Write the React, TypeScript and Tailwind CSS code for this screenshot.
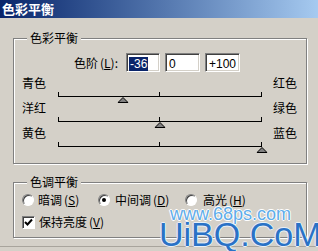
import React from "react";

const cjk = `"Noto Sans CJK SC", "Liberation Sans", sans-serif`;

type Slider = { left: string; right: string; value: number };

const sliders: Slider[] = [
  { left: "青色", right: "红色", value: -36 },
  { left: "洋红", right: "绿色", value: 0 },
  { left: "黄色", right: "蓝色", value: 100 },
];

function Thumb() {
  return (
    <svg width="11" height="6" viewBox="0 0 11 6" className="block">
      <defs>
        <pattern id="hatch" width="2" height="2" patternUnits="userSpaceOnUse">
          <rect width="2" height="2" fill="#fff" />
          <rect width="1" height="1" fill="#000" />
          <rect x="1" y="1" width="1" height="1" fill="#000" />
        </pattern>
      </defs>
      <polygon points="5.5,0.5 10.5,5.5 0.5,5.5" fill="url(#hatch)" stroke="#000" strokeWidth="1" />
    </svg>
  );
}

function Underlined({ pre, ch, post }: { pre: string; ch: string; post?: string }) {
  return (
    <span className="whitespace-nowrap">
      {pre}
      <span className="ml-[2px]">(</span>
      <span className="underline underline-offset-1">{ch}</span>)
      {post}
    </span>
  );
}

function Sunken({ children, className = "" }: { children: React.ReactNode; className?: string }) {
  return (
    <div
      className={`border border-t-[#808080] border-l-[#808080] border-b-white border-r-white bg-white shadow-[inset_1px_1px_0_#404040,inset_-1px_-1px_0_#d4d0c8] ${className}`}
    >
      {children}
    </div>
  );
}

function Radio({ checked }: { checked?: boolean }) {
  return (
    <span className="grid size-[12px] shrink-0 place-items-center rounded-full border border-t-[#808080] border-l-[#808080] border-b-white border-r-white bg-white shadow-[inset_1px_1px_0_#404040]">
      {checked ? <span className="size-[4px] rounded-full bg-black" /> : null}
    </span>
  );
}

export default function App() {
  return (
    <div
      className="relative h-[251px] w-[318px] overflow-hidden bg-[#d4d0c8] text-[12px] leading-[14px] text-black"
      style={{ fontFamily: cjk }}
    >
      <div className="flex h-[18px] items-center bg-gradient-to-r from-[#0a246a] to-[#a6caf0] pl-[2px] text-[13px] font-bold text-white">
        色彩平衡
      </div>

      <div className="pl-[13px] pr-[11px]">
        <fieldset className="mt-[12px] border border-[#808080] p-0 shadow-[inset_1px_1px_0_#fff,1px_1px_0_#fff]">
          <legend className="ml-[13px] bg-[#d4d0c8] px-[3px] leading-[16px]">色彩平衡</legend>

          <div className="flex items-center pl-[60px] pt-[7px]">
            <Underlined pre="色阶" ch="L" post=":" />
            <div className="ml-[8px] flex gap-[5px]">
              <Sunken className="h-[19px] w-[34px] pl-[2px] pt-[2px]">
                <span className="bg-[#0a246a] px-[1px] text-white" style={{ fontFamily: `"Liberation Sans", sans-serif` }}>
                  -36
                </span>
              </Sunken>
              <Sunken className="h-[19px] w-[35px] pl-[3px] pt-[2px]">
                <span style={{ fontFamily: `"Liberation Sans", sans-serif` }}>0</span>
              </Sunken>
              <Sunken className="h-[19px] w-[35px] pl-[3px] pt-[2px]">
                <span style={{ fontFamily: `"Liberation Sans", sans-serif` }}>+100</span>
              </Sunken>
            </div>
          </div>

          <div className="mt-[4px] flex flex-col gap-[4px] pb-[16px]">
            {sliders.map((s) => (
              <div key={s.left}>
                <div className="flex justify-between pl-[8px] pr-[9px]">
                  <span>{s.left}</span>
                  <span>{s.right}</span>
                </div>
                <div className="relative ml-[44px] mt-[2px] flex h-[5px] w-[204px]">
                  <div className="w-1/2 border-b border-l border-r border-black" />
                  <div className="w-1/2 border-b border-r border-black" />
                  <div
                    className="absolute top-full -translate-x-1/2"
                    style={{ left: `${((s.value + 100) / 200) * 100}%` }}
                  >
                    <Thumb />
                  </div>
                </div>
              </div>
            ))}
          </div>
        </fieldset>

        <fieldset className="mt-[10px] border border-[#808080] p-0 shadow-[inset_1px_1px_0_#fff,1px_1px_0_#fff]">
          <legend className="ml-[13px] bg-[#d4d0c8] px-[3px] leading-[16px]">色调平衡</legend>
          <div className="flex flex-col gap-[8px] pb-[8px] pl-[8px] pt-[3px]">
            <div className="flex items-center">
              <Radio />
              <span className="ml-[4px] w-[60px] shrink-0">
                <Underlined pre="暗调" ch="S" />
              </span>
              <Radio checked />
              <span className="ml-[5px] w-[70px] shrink-0">
                <Underlined pre="中间调" ch="D" />
              </span>
              <Radio />
              <span className="ml-[6px]">
                <Underlined pre="高光" ch="H" />
              </span>
            </div>
            <div className="flex items-center">
              <span className="grid size-[13px] place-items-center border border-t-[#808080] border-l-[#808080] border-b-white border-r-white bg-white shadow-[inset_1px_1px_0_#404040]">
                <svg width="9" height="9" viewBox="0 0 9 9">
                  <path d="M1 4 L3.5 6.5 L8 1.5" fill="none" stroke="#000" strokeWidth="2" />
                </svg>
              </span>
              <span className="ml-[4px]">
                <Underlined pre="保持亮度" ch="V" />
              </span>
            </div>
          </div>
        </fieldset>
      </div>

      <div className="mt-[8px] border-t border-[#a8a49c]" />

      <div
        className="pointer-events-none absolute left-[170px] top-[204px] text-[18px] leading-[20px] text-[#5eacea]"
        style={{
          fontFamily: `"Liberation Sans", sans-serif`,
          textShadow: "1px 0 #fff, -1px 0 #fff, 0 1px #fff, 0 -1px #fff",
        }}
      >
        www.68ps.com
      </div>
      <div
        className="pointer-events-none absolute left-[159px] top-[218px] text-[34px] leading-[33px] text-[#2a72c6]"
        style={{
          fontFamily: `"Liberation Sans", sans-serif`,
          textShadow: "1px 0 #e8f0f8, -1px 0 #e8f0f8, 0 1px #e8f0f8, 0 -1px #e8f0f8",
        }}
      >
        UiBQ.CoM
      </div>
    </div>
  );
}
